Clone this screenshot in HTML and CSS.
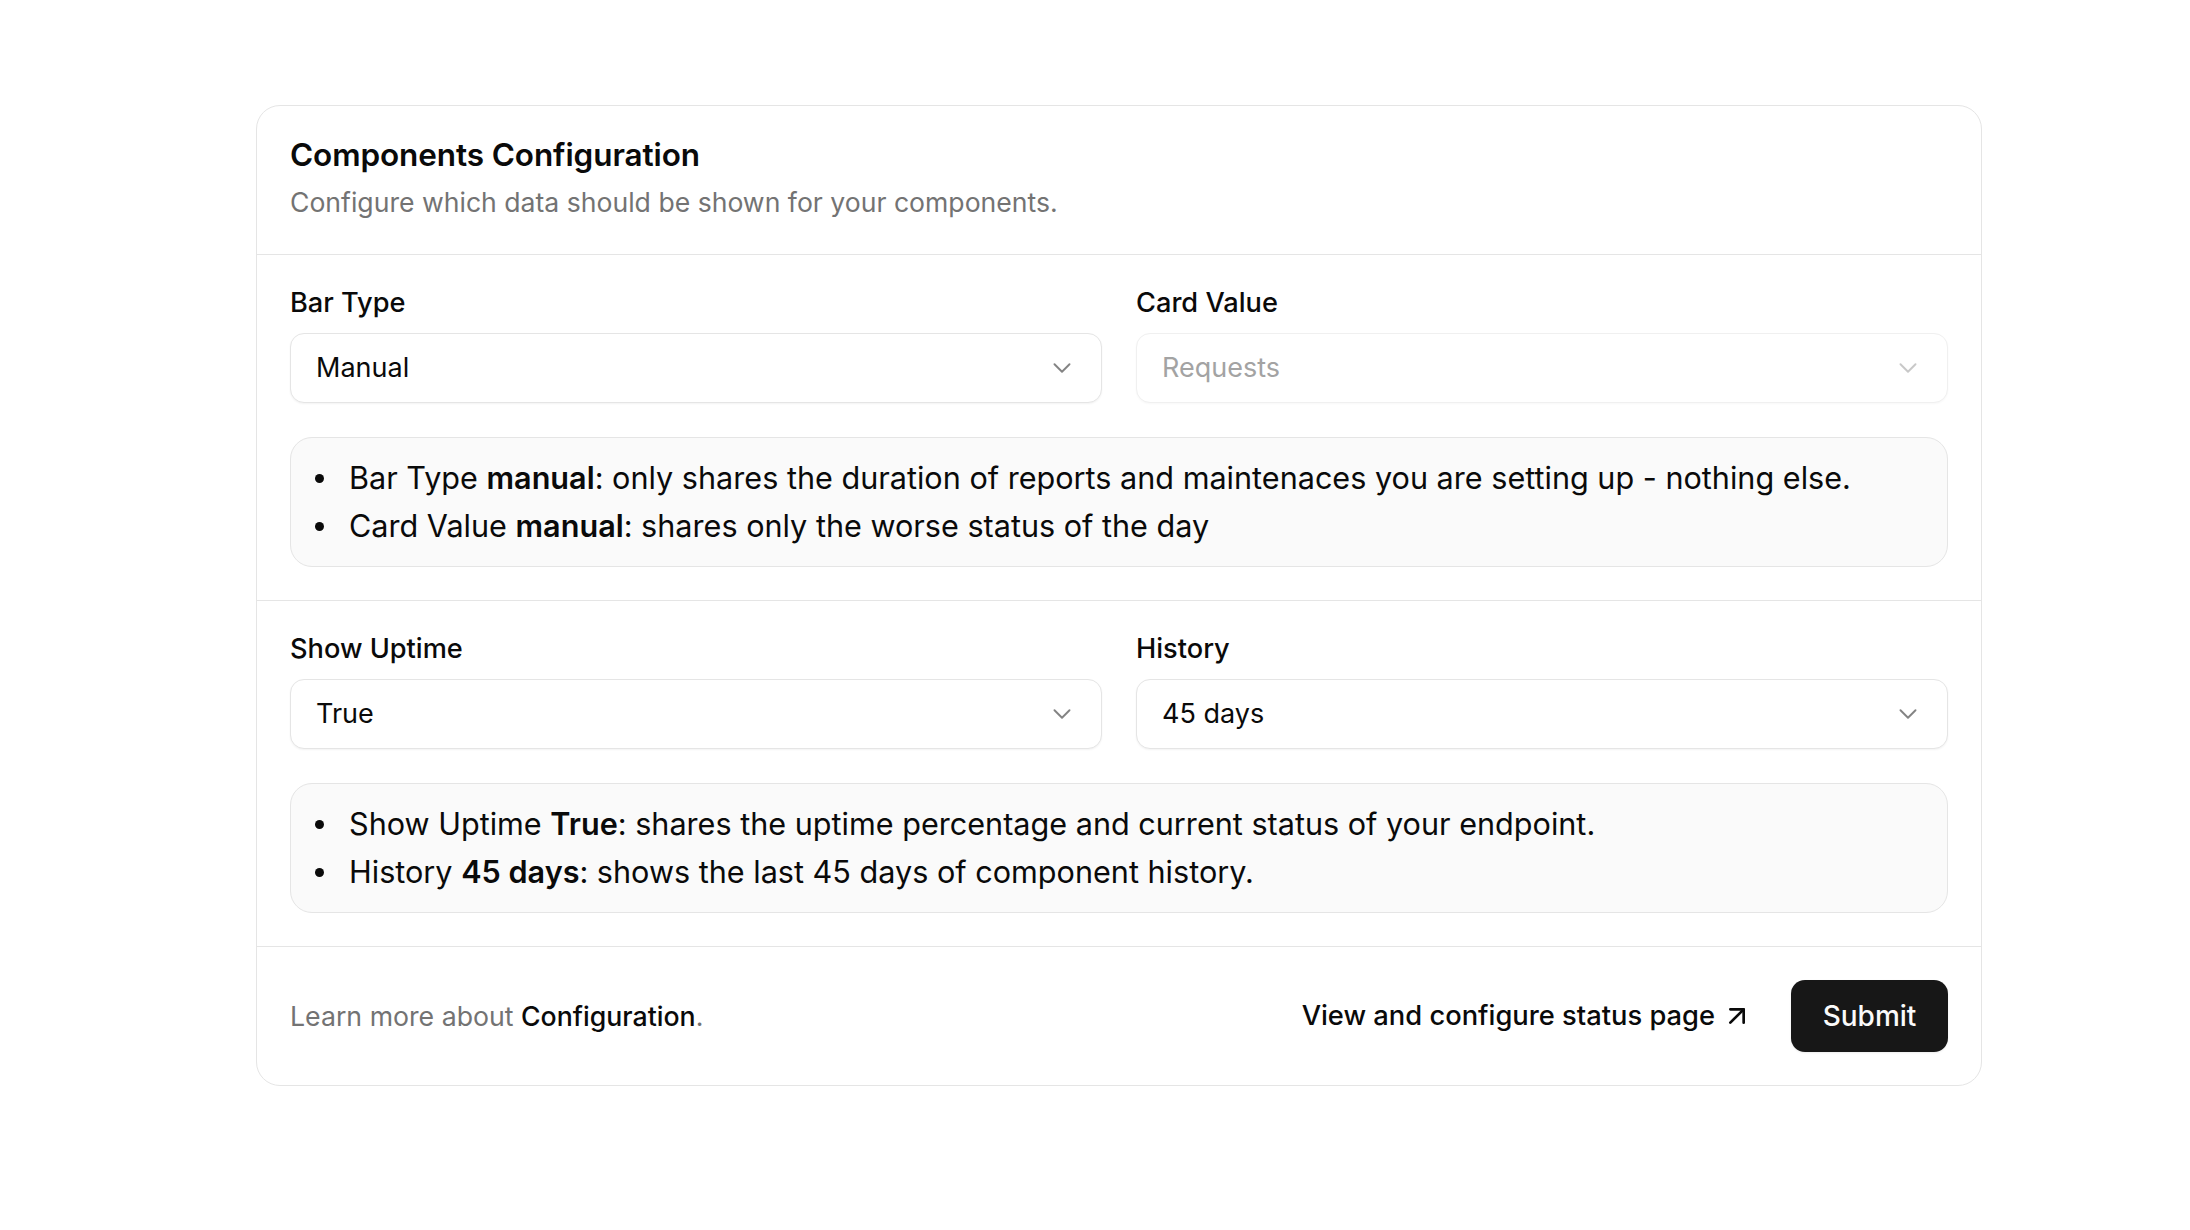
FILE: index.html
```html
<!DOCTYPE html>
<html lang="en">
<head>
<meta charset="utf-8">
<title>Components Configuration</title>
<link rel="stylesheet" href="styles.css">
</head>
<body>
<main class="page">
  <section class="card">
    <header class="card-header">
      <h2 class="card-title">Components Configuration</h2>
      <p class="card-desc">Configure which data should be shown for your components.</p>
    </header>

    <div class="card-section">
      <div class="fields">
        <div class="field">
          <label class="label">Bar Type</label>
          <div class="select">
            <span class="select-value">Manual</span>
            <svg class="chevron" viewBox="0 0 24 24" fill="none" stroke="currentColor" stroke-width="1.5" stroke-linecap="round" stroke-linejoin="round"><path d="m6 9 6 6 6-6"/></svg>
          </div>
        </div>
        <div class="field">
          <label class="label">Card Value</label>
          <div class="select disabled">
            <span class="select-value">Requests</span>
            <svg class="chevron" viewBox="0 0 24 24" fill="none" stroke="currentColor" stroke-width="1.5" stroke-linecap="round" stroke-linejoin="round"><path d="m6 9 6 6 6-6"/></svg>
          </div>
        </div>
      </div>
      <div class="info">
        <ul class="info-list">
          <li><span>Bar Type <strong>manual</strong>: only shares the duration of reports and maintenaces you are setting up - nothing else.</span></li>
          <li><span>Card Value <strong>manual</strong>: shares only the worse status of the day</span></li>
        </ul>
      </div>
    </div>

    <div class="card-section">
      <div class="fields">
        <div class="field">
          <label class="label">Show Uptime</label>
          <div class="select">
            <span class="select-value">True</span>
            <svg class="chevron" viewBox="0 0 24 24" fill="none" stroke="currentColor" stroke-width="1.5" stroke-linecap="round" stroke-linejoin="round"><path d="m6 9 6 6 6-6"/></svg>
          </div>
        </div>
        <div class="field">
          <label class="label">History</label>
          <div class="select">
            <span class="select-value">45 days</span>
            <svg class="chevron" viewBox="0 0 24 24" fill="none" stroke="currentColor" stroke-width="1.5" stroke-linecap="round" stroke-linejoin="round"><path d="m6 9 6 6 6-6"/></svg>
          </div>
        </div>
      </div>
      <div class="info">
        <ul class="info-list">
          <li><span>Show Uptime <strong>True</strong>: shares the uptime percentage and current status of your endpoint.</span></li>
          <li><span>History <strong>45 days</strong>: shows the last 45 days of component history.</span></li>
        </ul>
      </div>
    </div>

    <footer class="card-footer">
      <p class="footer-note">Learn more about <a class="footer-link" href="#">Configuration</a>.</p>
      <div class="footer-actions">
        <a class="status-link" href="#">View and configure status page
          <svg class="arrow" viewBox="0 0 24 24" fill="none" stroke="currentColor" stroke-width="2" stroke-linecap="round" stroke-linejoin="round"><path d="M7 7h10v10"/><path d="M7 17 17 7"/></svg>
        </a>
        <button class="submit" type="button">Submit</button>
      </div>
    </footer>
  </section>
</main>
</body>
</html>
```

FILE: styles.css
```css
* { box-sizing: border-box; }

html, body {
  margin: 0;
  background: #ffffff;
}

body {
  font-family: Inter, "Noto Sans", sans-serif;
  color: #0a0a0a;
}

.page {
  padding: 105px 0 0 256px;
}

.card {
  width: 1726px;
  border: 1px solid #e5e5e5;
  border-radius: 24px;
  background: #ffffff;
}

.card-header {
  padding: 30px 33px 34px;
  border-bottom: 1px solid #e5e5e5;
}

.card-title {
  margin: 0;
  font-size: 31.5px;
  line-height: 38px;
  font-weight: 600;
  letter-spacing: -0.1px;
}

.card-desc {
  margin: 10px 0 0;
  font-size: 26.6px;
  line-height: 36px;
  color: #737373;
}

.card-section {
  padding: 30px 33px 33px;
  border-bottom: 1px solid #e5e5e5;
  display: flex;
  flex-direction: column;
  gap: 34px;
}

.fields {
  display: grid;
  grid-template-columns: 1fr 1fr;
  gap: 34px;
}

.field {
  display: flex;
  flex-direction: column;
  gap: 12px;
}

.label {
  font-size: 27.2px;
  line-height: 36px;
  font-weight: 500;
}

.select {
  height: 70px;
  border: 1px solid #e5e5e5;
  border-radius: 14px;
  padding: 0 24px 0 25px;
  display: flex;
  align-items: center;
  justify-content: space-between;
  box-shadow: 0 1px 2px rgba(0, 0, 0, 0.05);
  background: #ffffff;
}

.select-value {
  font-size: 27px;
  line-height: 36px;
}

.chevron {
  width: 30px;
  height: 30px;
  color: #0a0a0a;
  opacity: 0.5;
}

.select.disabled {
  border-color: #f0f0f0;
  box-shadow: 0 1px 2px rgba(0, 0, 0, 0.03);
}

.select.disabled .select-value {
  color: #a3a3a3;
}

.select.disabled .chevron {
  opacity: 0.22;
}

.info {
  background: #fafafa;
  border: 1px solid #e5e5e5;
  border-radius: 22px;
  padding: 16px 24px;
}

.info-list {
  margin: 0;
  padding: 0;
  list-style: none;
}

.info-list li {
  display: flex;
  align-items: center;
  gap: 25px;
  font-size: 30.6px;
  line-height: 48px;
}

.info-list li::before {
  content: "";
  flex: 0 0 9px;
  width: 9px;
  height: 9px;
  border-radius: 50%;
  background: #0a0a0a;
}

.info-list strong {
  font-weight: 600;
}

.card-footer {
  padding: 33px 33px;
  display: flex;
  align-items: center;
  justify-content: space-between;
}

.footer-note {
  margin: 0;
  font-size: 26.7px;
  line-height: 36px;
  color: #737373;
}

.footer-link {
  color: #0a0a0a;
  font-weight: 500;
  text-decoration: none;
}

.footer-actions {
  display: flex;
  align-items: center;
  gap: 38px;
}

.status-link {
  display: flex;
  align-items: center;
  gap: 6px;
  font-size: 27.3px;
  line-height: 36px;
  font-weight: 500;
  color: #0a0a0a;
  text-decoration: none;
}

.arrow {
  width: 32px;
  height: 32px;
}

.submit {
  height: 72px;
  width: 157px;
  border: none;
  border-radius: 14px;
  background: #171717;
  color: #fafafa;
  font-family: Inter, "Noto Sans", sans-serif;
  font-size: 28px;
  font-weight: 500;
  box-shadow: 0 1px 2px rgba(0, 0, 0, 0.08);
}
```
